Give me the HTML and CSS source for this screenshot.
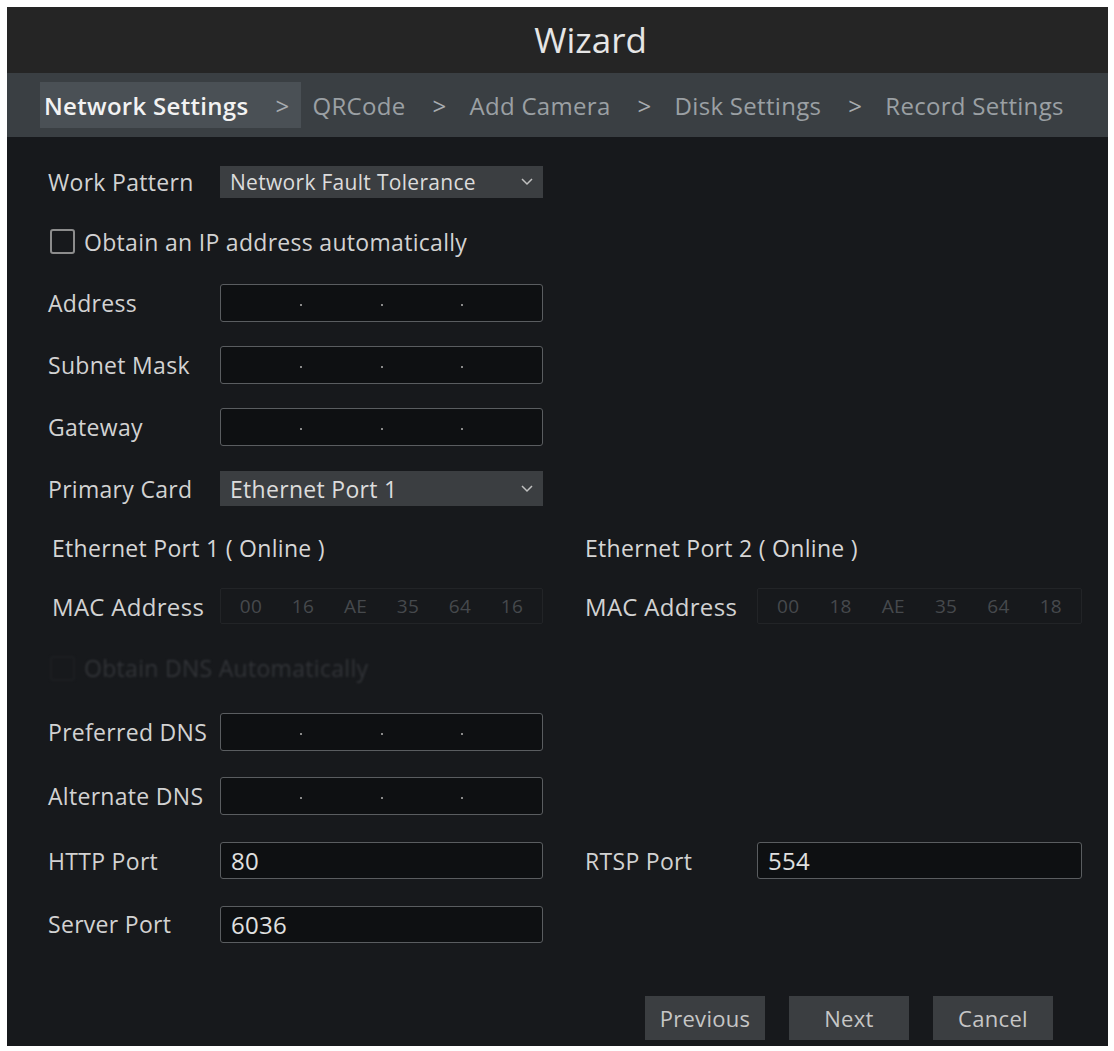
FILE: index.html
```html
<!DOCTYPE html>
<html lang="en">

<head>
    <meta charset="UTF-8">
    <meta name="viewport" content="width=device-width, initial-scale=1.0">
    <title>Wizard</title>

    <link rel="stylesheet" href="styles.css">
</head>

<body>

    <div class="wizard">

        <div class="title-bar">Wizard</div>

        <div class="steps">
            <div class="step active">Network Settings<span class="sep">&gt;</span></div>
            <div class="step">QRCode<span class="sep">&gt;</span></div>
            <div class="step">Add Camera<span class="sep">&gt;</span></div>
            <div class="step">Disk Settings<span class="sep">&gt;</span></div>
            <div class="step">Record Settings</div>
        </div>

        <div class="content">

            <div class="form">

                <div class="row">
                    <div class="field">
                        <span class="label">Work Pattern</span>
                        <div class="select small">Network Fault Tolerance
                            <svg class="chevron" viewBox="0 0 12 8"><polyline points="1,1 6,6 11,1" /></svg>
                        </div>
                    </div>
                </div>

                <div class="row">
                    <label class="check">
                        <span class="box"></span>
                        Obtain an IP address automatically
                    </label>
                </div>

                <div class="row">
                    <div class="field">
                        <span class="label">Address</span>
                        <div class="ip-box">
                            <span class="seg"></span><span class="dot"></span>
                            <span class="seg"></span><span class="dot"></span>
                            <span class="seg"></span><span class="dot"></span>
                            <span class="seg"></span>
                        </div>
                    </div>
                </div>

                <div class="row">
                    <div class="field">
                        <span class="label">Subnet Mask</span>
                        <div class="ip-box">
                            <span class="seg"></span><span class="dot"></span>
                            <span class="seg"></span><span class="dot"></span>
                            <span class="seg"></span><span class="dot"></span>
                            <span class="seg"></span>
                        </div>
                    </div>
                </div>

                <div class="row">
                    <div class="field">
                        <span class="label">Gateway</span>
                        <div class="ip-box">
                            <span class="seg"></span><span class="dot"></span>
                            <span class="seg"></span><span class="dot"></span>
                            <span class="seg"></span><span class="dot"></span>
                            <span class="seg"></span>
                        </div>
                    </div>
                </div>

                <div class="row">
                    <div class="field">
                        <span class="label">Primary Card</span>
                        <div class="select">Ethernet Port 1
                            <svg class="chevron" viewBox="0 0 12 8"><polyline points="1,1 6,6 11,1" /></svg>
                        </div>
                    </div>
                </div>

                <div class="row">
                    <div class="port-title indent">Ethernet Port 1 ( Online )</div>
                    <div class="port-title">Ethernet Port 2 ( Online )</div>
                </div>

                <div class="row">
                    <div class="field">
                        <span class="label mac-label indent">MAC Address</span>
                        <div class="mac-box">
                            <span>00</span><span>16</span><span>AE</span><span>35</span><span>64</span><span>16</span>
                        </div>
                    </div>
                    <div class="field">
                        <span class="label mac-label">MAC Address</span>
                        <div class="mac-box wide">
                            <span>00</span><span>18</span><span>AE</span><span>35</span><span>64</span><span>18</span>
                        </div>
                    </div>
                </div>

                <div class="row">
                    <label class="check disabled">
                        <span class="box"></span>
                        Obtain DNS Automatically
                    </label>
                </div>

                <div class="row">
                    <div class="field">
                        <span class="label">Preferred DNS</span>
                        <div class="ip-box">
                            <span class="seg"></span><span class="dot"></span>
                            <span class="seg"></span><span class="dot"></span>
                            <span class="seg"></span><span class="dot"></span>
                            <span class="seg"></span>
                        </div>
                    </div>
                </div>

                <div class="row">
                    <div class="field">
                        <span class="label">Alternate DNS</span>
                        <div class="ip-box">
                            <span class="seg"></span><span class="dot"></span>
                            <span class="seg"></span><span class="dot"></span>
                            <span class="seg"></span><span class="dot"></span>
                            <span class="seg"></span>
                        </div>
                    </div>
                </div>

                <div class="row">
                    <div class="field">
                        <span class="label">HTTP Port</span>
                        <div class="text-box">80</div>
                    </div>
                    <div class="field">
                        <span class="label">RTSP Port</span>
                        <div class="text-box wide">554</div>
                    </div>
                </div>

                <div class="row">
                    <div class="field">
                        <span class="label">Server Port</span>
                        <div class="text-box">6036</div>
                    </div>
                </div>

            </div>

            <div class="buttons">
                <div class="btn">Previous</div>
                <div class="btn">Next</div>
                <div class="btn">Cancel</div>
            </div>

        </div>

    </div>

</body>

</html>
```

FILE: styles.css
```css
*,
*::before,
*::after {
    margin: 0;
    padding: 0;
    box-sizing: border-box;
}

body {
    background-color: #ffffff;
    font-family: "Open Sans", "Noto Sans", sans-serif;
    color: #d2d2d2;
}

.wizard {
    margin: 7px;
    width: 1101px;
    height: 1039px;
    background-color: #17191c;
    display: flex;
    flex-direction: column;
}

.title-bar {
    height: 66px;
    background-color: #252525;
    color: #e6e6e6;
    font-size: 35px;
    line-height: 66px;
    text-align: center;
    padding-left: 66px;
}

.steps {
    height: 64px;
    background-color: #3a3f43;
    display: flex;
    align-items: center;
    padding-left: 33px;
    gap: 7px;
    font-size: 24px;
    letter-spacing: 0.3px;
    color: #9ba0a4;
}

.step {
    display: flex;
    align-items: center;
    gap: 27px;
    height: 46px;
    padding: 0 12px 0 4px;
    white-space: nowrap;
}

.step.active {
    background-color: #4a5055;
    color: #f2f2f2;
    font-weight: 600;
}

.step .sep {
    font-weight: 400;
    color: #a8acb0;
}

.content {
    flex: 1;
    display: flex;
    flex-direction: column;
    padding: 15px 0 6px 41px;
}

.form {
    display: grid;
    grid-template-rows: 59px 61px 62px 62px 62px 61px 57px 60px 64px 63px 65px 65px 62px;
    font-size: 23px;
    letter-spacing: 0.3px;
}

.row {
    display: grid;
    grid-template-columns: 537px 1fr;
    align-items: center;
}

.field {
    display: flex;
    align-items: center;
}

.label {
    width: 172px;
    flex-shrink: 0;
    white-space: nowrap;
}

.indent {
    padding-left: 4px;
}

.select {
    width: 323px;
    height: 35px;
    background-color: #3b3e41;
    display: flex;
    align-items: center;
    padding: 0 10px;
    color: #dcdcdc;
}

.select.small {
    font-size: 21px;
    height: 32px;
}

.chevron {
    width: 12px;
    height: 8px;
    margin-left: auto;
    fill: none;
    stroke: #c0c0c0;
    stroke-width: 1.5;
}

.check {
    display: flex;
    align-items: center;
    gap: 9px;
    padding-left: 2px;
}

.check .box {
    width: 25px;
    height: 25px;
    border: 2px solid #8c8c8c;
    border-radius: 3px;
}

.check.disabled {
    color: #323438;
    filter: blur(1px);
}

.check.disabled .box {
    border-color: #1d1f22;
}

.ip-box {
    width: 323px;
    height: 38px;
    border: 1px solid #5a5d60;
    border-radius: 3px;
    background-color: #0e1012;
    display: flex;
    align-items: center;
}

.ip-box .seg {
    flex: 1;
}

.ip-box .dot {
    width: 2px;
    height: 2px;
    margin-top: 4px;
    background-color: #8a8a8a;
}

.port-title {
    color: #d6d6d6;
}

.mac-label {
    font-size: 24px;
}

.mac-box {
    width: 323px;
    height: 36px;
    border: 1px solid #222427;
    border-radius: 2px;
    display: flex;
    align-items: center;
    justify-content: space-around;
    padding: 0 4px;
    color: #46494d;
    font-size: 19px;
}

.mac-box.wide {
    width: 325px;
}

.text-box {
    width: 323px;
    height: 37px;
    border: 1px solid #5a5d60;
    border-radius: 3px;
    background-color: #0e1012;
    display: flex;
    align-items: center;
    padding-left: 10px;
    color: #e0e0e0;
    font-size: 24px;
}

.text-box.wide {
    width: 325px;
}

.buttons {
    margin-top: auto;
    display: flex;
    justify-content: flex-end;
    gap: 24px;
    padding-right: 55px;
}

.btn {
    width: 120px;
    height: 44px;
    background-color: #3b3e41;
    color: #c6c6c6;
    font-size: 22px;
    letter-spacing: 0.3px;
    display: flex;
    align-items: center;
    justify-content: center;
}
```
